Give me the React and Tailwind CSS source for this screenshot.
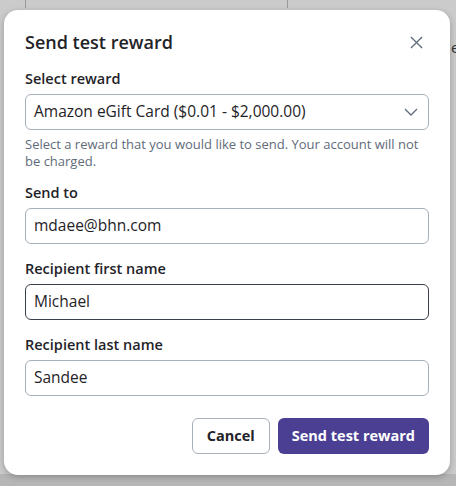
export default function App() {
  const label = "text-[14.5px] leading-[20px] font-semibold text-[#1f2328] mb-[5px]";
  const input =
    "h-9 w-full rounded-md border bg-white px-2 flex items-center text-[15.5px] text-[#1f2328]";
  return (
    <div className="relative h-[486px] w-[456px] overflow-hidden bg-[#cbcbcb] pl-[4px] pr-[6px] pt-[10px] font-['Open_Sans',sans-serif]">
      {/* faint page behind the overlay */}
      <div className="absolute left-[25px] top-0 h-[8px] w-px bg-[#9a9a9a]" />
      <div className="absolute left-[287px] top-0 h-[8px] w-px bg-[#9a9a9a]" />
      <div className="absolute left-[451px] top-[36px] text-[15px] text-[#333]">er</div>
      <div className="absolute inset-x-0 bottom-0 h-[12px] bg-[#b6b6b6]" />

      <div className="relative flex flex-col rounded-[14px] bg-white px-[21px] pt-[20px] pb-[21px] shadow-[0_2px_6px_rgba(0,0,0,0.25)]">
        <div className="flex items-center justify-between">
          <h2 className="text-[18px] font-semibold text-[#1f2328] leading-[24px]">Send test reward</h2>
          <svg width="13" height="13" viewBox="0 0 14 14" className="mr-[6px]" stroke="#5f6b7a" strokeWidth="1.4" fill="none">
            <path d="M1 1L13 13M13 1L1 13" />
          </svg>
        </div>

        <div className="mt-[15px]">
          <div className={label}>Select reward</div>
          <div className={input + " justify-between border-[#a7b0bb]"}>
            <span>Amazon eGift Card ($0.01 - $2,000.00)</span>
            <svg width="14" height="8" viewBox="0 0 14 8" fill="none" stroke="#5f6b7a" strokeWidth="1.3" className="mr-[2px]">
              <path d="M1 1l6 6 6-6" />
            </svg>
          </div>
          <p className="mt-[6px] text-[13px] leading-[17px] text-[#5f6b7a]">
            Select a reward that you would like to send. Your account will not be charged.
          </p>
        </div>

        <div className="mt-[13px]">
          <div className={label}>Send to</div>
          <div className={input + " border-[#a7b0bb]"}>mdaee@bhn.com</div>
        </div>

        <div className="mt-[15px]">
          <div className={label}>Recipient first name</div>
          <div className={input + " border-[#3a4048]"}>Michael</div>
        </div>

        <div className="mt-[15px]">
          <div className={label}>Recipient last name</div>
          <div className={input + " border-[#a7b0bb]"}>Sandee</div>
        </div>

        <div className="mt-[22px] flex justify-end gap-2">
          <button className="h-9 rounded-md border border-[#a7b0bb] bg-white px-[14px] text-[14.5px] font-bold text-[#1f2328]">
            Cancel
          </button>
          <button className="h-9 rounded-md bg-[#4b3f94] px-[14px] text-[14.5px] font-bold text-white">
            Send test reward
          </button>
        </div>
      </div>
    </div>
  );
}
